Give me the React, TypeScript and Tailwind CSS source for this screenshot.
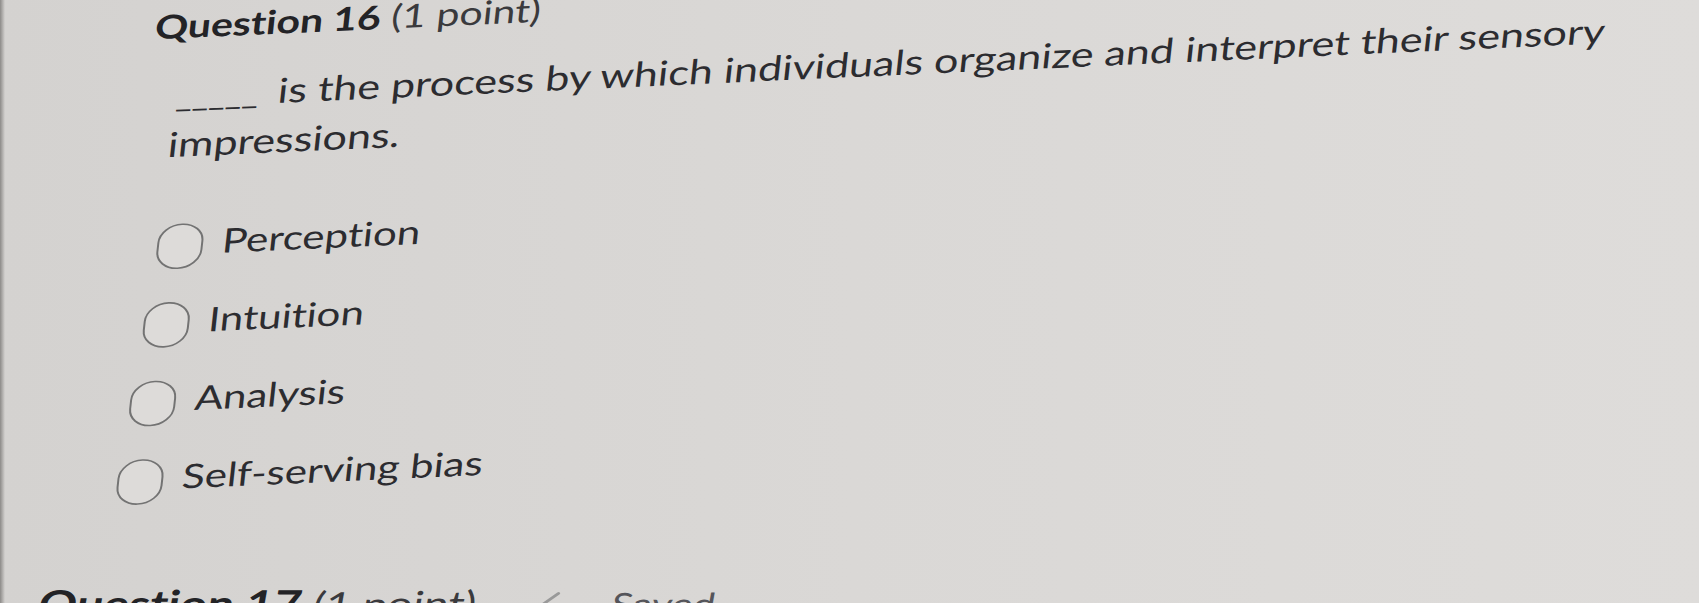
const options = [
  { label: "Perception", indent: "ml-0" },
  { label: "Intuition", indent: "-ml-[5px]" },
  { label: "Analysis", indent: "-ml-[10px]" },
  { label: "Self-serving bias", indent: "-ml-[14px]" },
];

export default function App() {
  return (
    <div className="relative h-[603px] w-[1699px] overflow-hidden bg-gradient-to-r from-[#d4d2d0] via-[#dad8d6] to-[#dedcda] font-['Lato',sans-serif] text-[#2c2c30] [font-variant-ligatures:no-common-ligatures]">
      {/* screen edge */}
      <div className="absolute left-0 top-0 h-full w-[5px] bg-gradient-to-r from-[#8c8a88] to-transparent" />

      {/* photo of a screen taken at an angle: skew + vertical squash */}
      <div className="origin-top-left [transform:matrix(1,-0.045,-0.088,0.8,0,0)]">
        <div className="pl-[159px] pt-[19px]">
          <h2 className="text-[41px] leading-[48px] text-[#232326]">
            <span className="font-bold">Question 16</span>{" "}
            <span className="text-[#3a3a3d]">(1 point)</span>
          </h2>
        </div>

        <p className="mt-[32px] pl-[185px] indent-[3px] text-[43px] leading-[60px]">
          <span className="mr-[8px] text-[36px]">_____</span> is the process by which
          individuals organize and interpret their sensory
          <br />
          impressions.
        </p>

        <ul className="mt-[68px] flex flex-col gap-[38px] pl-[185px]">
          {options.map((option) => (
            <li key={option.label} className={`flex h-[60px] items-center gap-[19px] ${option.indent}`}>
              <span className="h-[57px] w-[46px] shrink-0 rounded-full border-2 border-[#737373] bg-[#dddbd9]" />
              <span className="pb-[10px] text-[42px] leading-[50px]">{option.label}</span>
            </li>
          ))}
        </ul>

        <div className="mt-[85px] flex origin-left rotate-[3.2deg] items-center pl-[106px] leading-[54px]">
          <span className="text-[48px] font-bold text-[#232326]">Question 17</span>
          <span className="ml-[12px] text-[45px] text-[#3a3a3d]">(1 point)</span>
          <svg
            className="ml-[40px] h-[34px] w-[44px]"
            viewBox="0 0 44 34"
            fill="none"
            stroke="#999999"
            strokeWidth="3.5"
            strokeLinecap="round"
            strokeLinejoin="round"
          >
            <path d="M3 19 L15 30 L41 4" />
          </svg>
          <span className="ml-[52px] text-[40px] text-[#55555a]">Saved</span>
        </div>
      </div>
    </div>
  );
}
